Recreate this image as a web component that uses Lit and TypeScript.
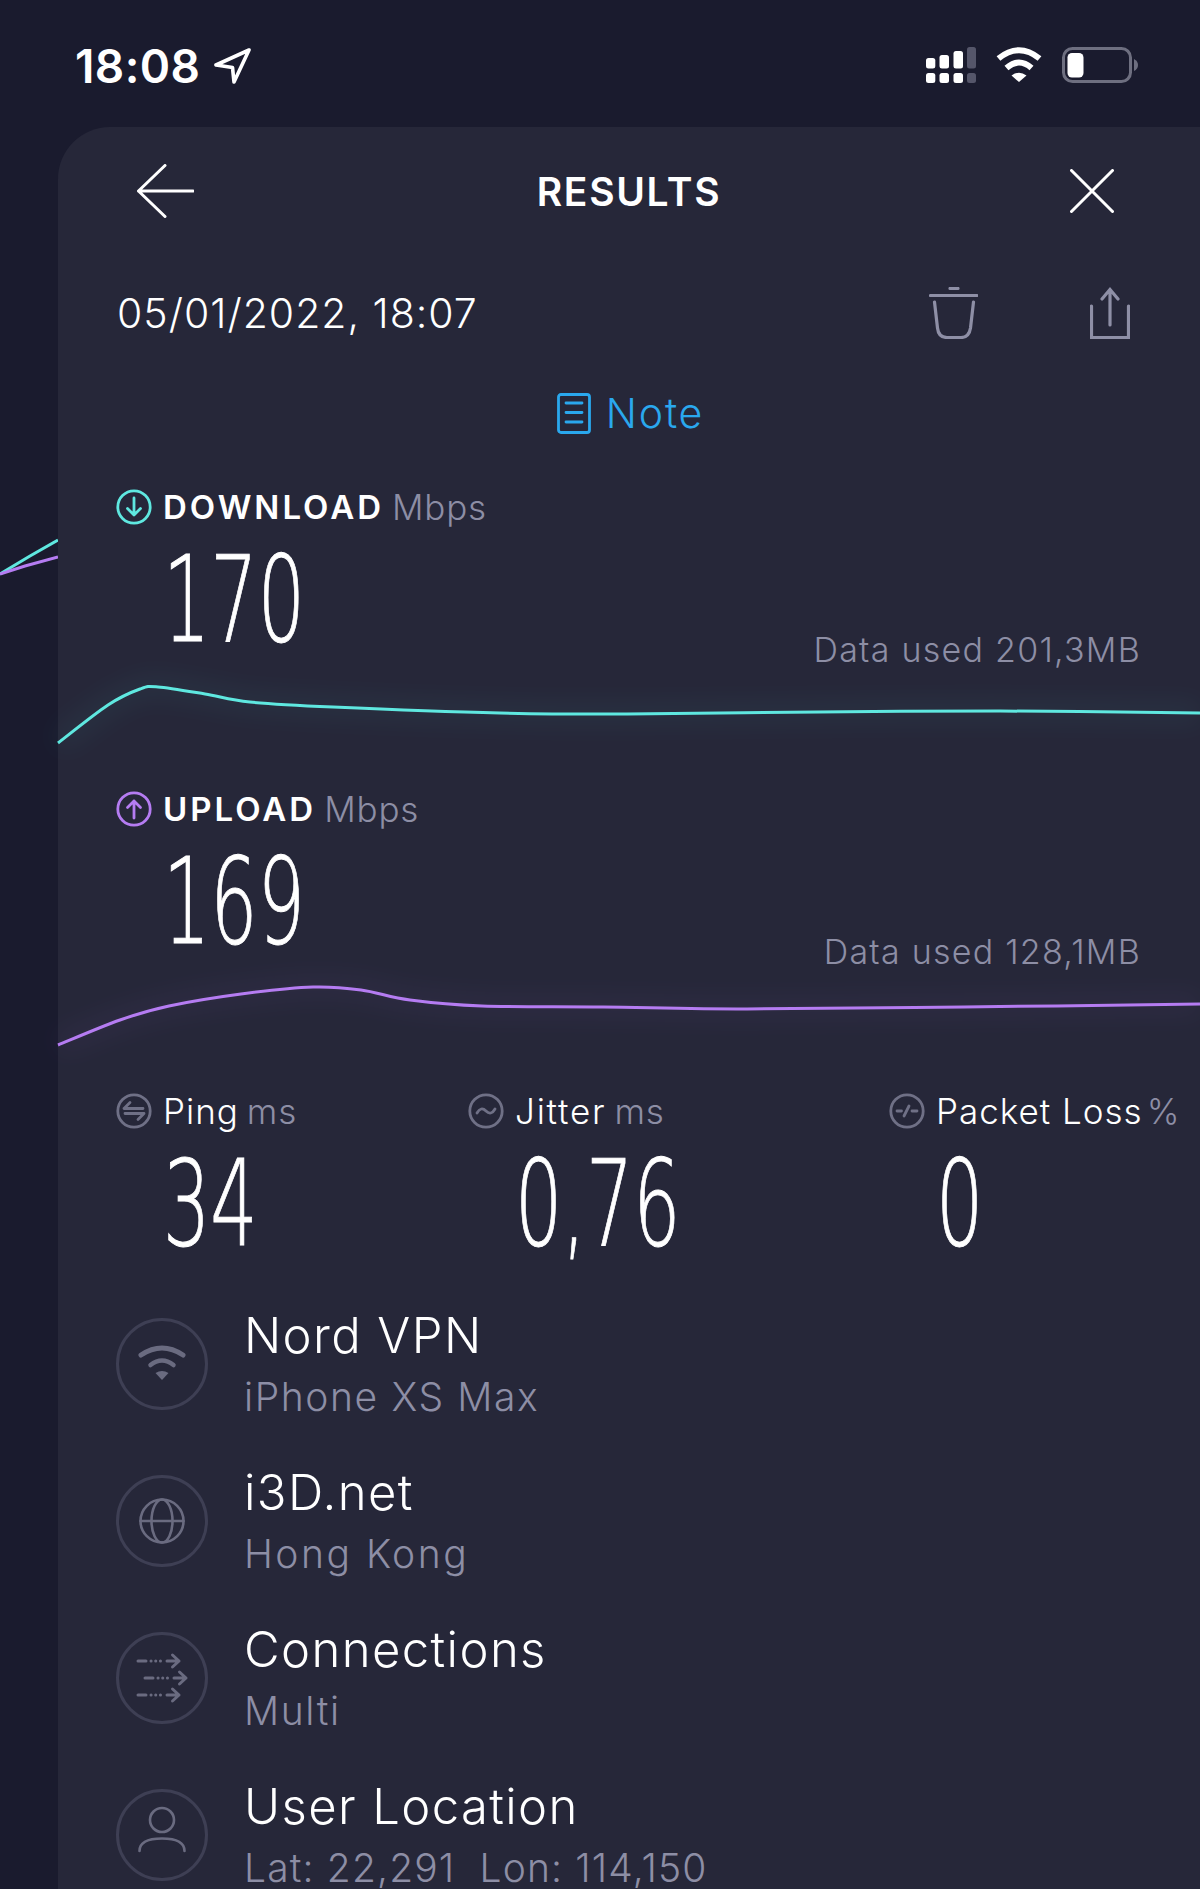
import { LitElement, html, css, svg } from "lit";
import { customElement } from "lit/decorators.js";

const P = (a: number[][]) => {
  let d = `M${a[0][0]} ${a[0][1]}`;
  for (let i = 0; i < a.length - 1; i++) {
    const p0 = a[Math.max(i - 1, 0)], p1 = a[i], p2 = a[i + 1], p3 = a[Math.min(i + 2, a.length - 1)];
    d += ` C${p1[0] + (p2[0] - p0[0]) / 6} ${p1[1] + (p2[1] - p0[1]) / 6} ${p2[0] - (p3[0] - p1[0]) / 6} ${p2[1] - (p3[1] - p1[1]) / 6} ${p2[0]} ${p2[1]}`;
  }
  return d;
};

const DOWN = P([[58,743],[108,705],[140,689],[158,687],[205,694],[250,702],[333,707],[500,713],[627,714],[819,712],[1000,711],[1200,713]]);
const UP = P([[58,1045],[120,1020],[169,1006],[241,994],[313,987],[361,990],[410,1000],[482,1006],[603,1007],[747,1009],[964,1007],[1200,1004]]);

const chart = (d: string, box: string, color: string) => html`
  <svg class="chart" viewBox=${box} width="1142" height="131">
    <path d=${d} fill="none" stroke=${color} stroke-width="22" opacity=".05" filter="url(#b)"></path>
    <path d=${d} fill="none" stroke=${color} stroke-width="3"></path>
    <defs><filter id="b" x="-10%" y="-200%" width="120%" height="500%"><feGaussianBlur stdDeviation="12"></feGaussianBlur></filter></defs>
  </svg>`;

const mini = (inner: unknown, color: string) => html`
  <svg class="mini" viewBox="0 0 36 36" width="36" height="36" fill="none" stroke=${color} stroke-width="2.8" stroke-linecap="round" stroke-linejoin="round">
    <circle cx="18" cy="18" r="16.2"></circle>${inner}
  </svg>`;

const rowIcon = (inner: unknown) => html`
  <svg class="round" viewBox="0 0 92 92" width="92" height="92" fill="none">
    <circle cx="46" cy="46" r="44.5" stroke="#3e3f54" stroke-width="3"></circle>
    <g stroke="#6a6b80" fill="none" stroke-width="2.6" stroke-linecap="round" stroke-linejoin="round">${inner}</g>
  </svg>`;

const conn = (x: number, y: number) => svg`
  <g stroke-width="3">
  <path d="M${x} ${y} H${x + 8}"></path>
  <path d="M${x + 13} ${y} H${x + 27}" stroke-dasharray=".1 4.6"></path>
  <path d="M${x + 29} ${y} H${x + 41} M${x + 34.500} ${y - 6} L${x + 41} ${y} L${x + 34.500} ${y + 6}"></path></g>`;

@customElement("app-root")
export class AppRoot extends LitElement {
  static styles = css`
    :host { display: block; width: 1200px; height: 1889px; overflow: hidden; position: relative; background: #1a1b2e; font-family: "Inter", "Liberation Sans", sans-serif; color: #fff; }
    .behind { position: absolute; left: 0; top: 530px; }
    .status { height: 127px; box-sizing: border-box; display: flex; align-items: flex-start; padding: 40px 62px 0 75px; justify-content: space-between; position: relative; }
    .time { display: flex; align-items: center; gap: 14px; font-size: 46px; line-height: 52px; font-weight: 600; letter-spacing: .4px; }
    .sys { display: flex; gap: 20px; padding-top: 7px; align-items: flex-start; }
    .sys svg { display: block; }
    .card { position: relative; margin-left: 58px; background: #262739; border-top-left-radius: 52px; height: 1762px; }
    .head { height: 128px; display: flex; align-items: center; justify-content: space-between; padding: 0 86px 0 79px; position: relative; }
    .title { position: absolute; left: 0; right: 0; text-align: center; font-size: 39px; font-weight: 600; letter-spacing: 1.7px; }
    .date { height: 116px; display: flex; align-items: center; justify-content: space-between; padding: 0 70px 0 59px; font-size: 41px; font-weight: 300; letter-spacing: 1px; }
    .acts { display: flex; gap: 112px; align-items: center; }
    .acts svg { display: block; }
    .note { height: 84px; display: flex; align-items: center; justify-content: center; gap: 15px; color: #2aa8ee; font-size: 41px; font-weight: 300; letter-spacing: 1.8px; padding-left: 3px; }
    .metric { height: 302px; position: relative; padding-top: 34px; box-sizing: border-box; }
    .label { display: flex; align-items: center; height: 36px; font-size: 34px; white-space: nowrap; }
    .label svg { margin: 0 11px 0 -1px; flex: none; }
    .label b { font-size: 33px; font-weight: 600; letter-spacing: 3px; }
    .label i { font-style: normal; font-weight: 300; color: #8d8ea5; margin-left: 8px; letter-spacing: .8px; font-size: 35px; }
    .label span.n { font-weight: 300; font-size: 35px; letter-spacing: 1px; }
    .label.j span.n { letter-spacing: 1.8px; }
    .label.p i { margin-left: 4px; }
    .m-top { padding: 0 59px; }
    .numrow { display: flex; justify-content: space-between; align-items: flex-start; height: 135px; }
    .num { display: block; font-family: "DejaVu Sans", sans-serif; font-weight: 200; font-size: 119px; line-height: 90px; height: 90px; margin: 30px 0 0 46px; transform: scaleX(.625); transform-origin: left center; white-space: nowrap; -webkit-text-stroke: 1px #fff; }
    .used { align-self: flex-end; font-size: 34px; font-weight: 300; color: #8d8ea5; line-height: 40px; margin-bottom: -10px; letter-spacing: 1.25px; }
    .chart { display: block; overflow: visible; }
    .stats { display: grid; grid-template-columns: 352px 421px 1fr; padding: 34px 0 0 59px; height: 259px; box-sizing: border-box; }
    .rows { display: flex; flex-direction: column; gap: 65px; padding-left: 58px; }
    .row { display: flex; height: 92px; align-items: flex-start; gap: 36px; }
    .round { flex: none; display: block; }
    .txt { margin-top: -12px; }
    .name { font-size: 49px; line-height: 60px; font-weight: 300; letter-spacing: 1.4px; white-space: nowrap; }
    .sub { margin-top: 11px; font-size: 39px; line-height: 40px; font-weight: 300; color: #8d8ea5; letter-spacing: 1.6px; white-space: pre; }
    .sub.wide { letter-spacing: 2.5px; }
    .sub.tight { letter-spacing: 1.15px; }
  `;

  render() {
    return html`
      <svg class="behind" width="58" height="60" viewBox="0 530 58 60" fill="none" stroke-width="3">
        <path d="M0 574 L30 556 L58 540" stroke="#5fe8e0"></path>
        <path d="M0 574 L25 566 L58 557" stroke="#b57cf2"></path>
      </svg>
      <div class="status">
        <div class="time">18:08
          <svg width="38" height="38" viewBox="214 47 38 38" fill="none" stroke="#fff" stroke-width="3.6" stroke-linejoin="round"><path d="M249 50 L216 65 L232.500 67.500 L234 82 Z"></path></svg>
        </div>
        <div class="sys">
          <svg width="50" height="36" viewBox="926 47 50 36" fill="#fff">
            <rect x="926" y="58" width="9.300" height="10.500" rx="2.500"></rect><rect x="939.500" y="55" width="9.500" height="13.500" rx="2.500"></rect><rect x="953.500" y="51" width="9.500" height="17.500" rx="2.500"></rect><rect x="967" y="47" width="9" height="21.500" rx="2.500" fill="#55566a"></rect>
            <rect x="926" y="73" width="9.300" height="10" rx="2.500"></rect><rect x="939.500" y="73" width="9.500" height="10" rx="2.500"></rect><rect x="953.500" y="73" width="9.500" height="10" rx="2.500"></rect><rect x="967" y="73" width="9" height="10" rx="2.500" fill="#55566a"></rect>
          </svg>
          <svg width="46" height="36" viewBox="997 47 46 36">
            <path d="M999.500 58.500 Q1020 42 1040.500 58.500" fill="none" stroke="#fff" stroke-width="6"></path>
            <path d="M1007.500 68 Q1020 57 1032.500 68" fill="none" stroke="#fff" stroke-width="6"></path>
            <path d="M1012.500 75.500 Q1020 70 1027.500 75.500 L1020 82 Z" fill="#fff"></path>
          </svg>
          <svg width="76" height="36" viewBox="1062 47 76 36">
            <rect x="1063.500" y="48.500" width="67" height="33" rx="9" fill="none" stroke="#6e6f80" stroke-width="3"></rect>
            <rect x="1067.500" y="53" width="16" height="24.500" rx="4.500" fill="#fff"></rect>
            <path d="M1134 59 Q1138 61 1138 65 Q1138 69 1134 71 Z" fill="#6e6f80"></path>
          </svg>
        </div>
      </div>
      <div class="card">
        <div class="head">
          <svg width="57" height="54" viewBox="137 164 57 54" fill="none" stroke="#fff" stroke-width="3" stroke-linecap="round" stroke-linejoin="round" style="display:block"><path d="M165 165.500 L138.500 191 L165 216.500 M138.500 191 H193"></path></svg>
          <div class="title">RESULTS</div>
          <svg width="44" height="44" viewBox="1070 169 44 44" fill="none" stroke="#fff" stroke-width="3" stroke-linecap="round" style="position:relative"><path d="M1071.500 170.500 L1112.500 211.500 M1112.500 170.500 L1071.500 211.500"></path></svg>
        </div>
        <div class="date"><span>05/01/2022, 18:07</span>
          <div class="acts">
            <svg width="49" height="52" viewBox="929 287 49 52" fill="none" stroke="#8e8fa6" stroke-width="3.200" stroke-linecap="round" stroke-linejoin="round">
              <path d="M950 288.500 H958 M930.500 295.500 H977 M934.500 302 L937.500 328 Q938.500 337.500 947 337.500 H961 Q969 337.500 970.500 328 L973.500 302"></path>
            </svg>
            <svg width="40" height="52" viewBox="1090 287 40 52" fill="none" stroke="#8e8fa6" stroke-width="3.200" stroke-linecap="round" stroke-linejoin="miter">
              <path d="M1091.500 306 V337.500 H1128.500 V306 M1110 325 V289.500 M1102 299 L1110 289.500 L1118 299"></path>
            </svg>
          </div>
        </div>
        <div class="note">
          <svg width="34" height="41" viewBox="0 0 34 41" fill="none" stroke="#2aa8ee" stroke-width="2.800" stroke-linecap="round" style="display:block"><rect x="1.500" y="1.500" width="31" height="38" rx="2.500"></rect><path d="M9 10 H25 M9 19.500 H25 M9 29 H25"></path></svg>
          <span>Note</span>
        </div>
        <div class="metric">
          <div class="m-top">
            <div class="label">${mini(svg`<path d="M18 9 V26 M11.500 19.500 L18 26 L24.500 19.500"></path>`, "#5fe8e0")}<b>DOWNLOAD</b><i>Mbps</i></div>
            <div class="numrow"><span class="num">170</span><span class="used">Data used 201,3MB</span></div>
          </div>
          ${chart(DOWN, "58 660 1142 131", "#5fe8e0")}
        </div>
        <div class="metric">
          <div class="m-top">
            <div class="label">${mini(svg`<path d="M18 27 V10 M11.500 16.500 L18 10 L24.500 16.500"></path>`, "#b57cf2")}<b>UPLOAD</b><i>Mbps</i></div>
            <div class="numrow"><span class="num">169</span><span class="used">Data used 128,1MB</span></div>
          </div>
          ${chart(UP, "58 962 1142 131", "#b57cf2")}
        </div>
        <div class="stats">
          <div>
            <div class="label">${mini(svg`<path d="M8 15.500 H27 M8 15.500 L14 9.500 M28 20.500 H9 M28 20.500 L22 26.500"></path>`, "#6f7086")}<span class="n">Ping</span><i>ms</i></div>
            <span class="num">34</span>
          </div>
          <div>
            <div class="label j">${mini(svg`<path d="M9 20 Q13 13 18 18 Q23 23 27 16"></path>`, "#6f7086")}<span class="n">Jitter</span><i>ms</i></div>
            <span class="num">0,76</span>
          </div>
          <div>
            <div class="label p">${mini(svg`<path d="M8 18 H12.500 M15 23 L20 13 M23 18 H28"></path>`, "#6f7086")}<span class="n">Packet Loss</span><i>%</i></div>
            <span class="num">0</span>
          </div>
        </div>
        <div class="rows">
          <div class="row">${rowIcon(svg`<path d="M25 37 Q46 23 67 37" stroke-width="5"></path><path d="M34.500 47 Q46 38 57.500 47" stroke-width="4.500"></path><path d="M39.500 55 Q46 51 52.500 55 L46 62 Z" fill="#6a6b80" stroke="none"></path>`)}
            <div class="txt"><div class="name">Nord VPN</div><div class="sub">iPhone XS Max</div></div></div>
          <div class="row">${rowIcon(svg`<circle cx="46" cy="46" r="21.500"></circle><ellipse cx="46" cy="46" rx="10.500" ry="21.500"></ellipse><path d="M24.500 46 H67.500"></path>`)}
            <div class="txt"><div class="name">i3D.net</div><div class="sub wide">Hong Kong</div></div></div>
          <div class="row">${rowIcon(svg`${conn(22, 29)}${conn(29, 46)}${conn(22, 63)}`)}
            <div class="txt"><div class="name">Connections</div><div class="sub">Multi</div></div></div>
          <div class="row">${rowIcon(svg`<circle cx="46" cy="31" r="12"></circle><path d="M23.500 62 Q23.500 49.500 46 49.500 Q68.500 49.500 68.500 62"></path>`)}
            <div class="txt"><div class="name">User Location</div><div class="sub tight">Lat: 22,291  Lon: 114,150</div></div></div>
        </div>
      </div>
    `;
  }
}
